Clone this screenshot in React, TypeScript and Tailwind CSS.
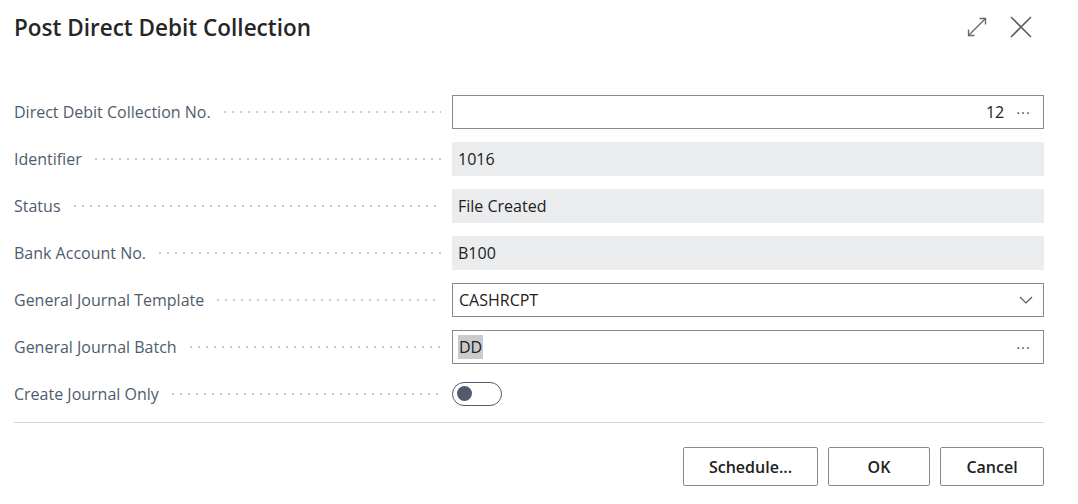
import React from "react";

const dots =
  "flex-1 h-[4px] mx-[10px] bg-[radial-gradient(circle,#c8c8c8_0.9px,transparent_1.3px)] bg-[length:8px_4px] bg-repeat-x";

function Row({ label, children }: { label: string; children: React.ReactNode }) {
  return (
    <div className="flex h-[47px] items-center">
      <div className="flex w-[438px] items-center pr-[1px]">
        <span className="text-[16px] text-[#505c6d] whitespace-nowrap">{label}</span>
        <span className={dots} />
      </div>
      <div className="flex-1">{children}</div>
    </div>
  );
}

function ReadOnly({ value }: { value: string }) {
  return (
    <div className="h-[34px] bg-[#ebecee] pl-[6px] flex items-center text-[16px] text-[#212121]">
      {value}
    </div>
  );
}

function Ellipsis() {
  return <span className="text-[15px] text-[#505c6d] tracking-[1px] leading-none pb-[6px]">...</span>;
}

export default function App() {
  return (
    <div
      className="w-[1078px] h-[504px] bg-white pl-[14px] pr-[34px]"
      style={{ fontFamily: '"Open Sans", "Noto Sans", sans-serif' }}
    >
      <div className="flex h-[88px] items-start pt-[13px]">
        <h1 className="flex-1 text-[22.5px] leading-[30px] font-semibold text-[#262626]">
          Post Direct Debit Collection
        </h1>
        <div className="flex items-center gap-[22px] pt-[3px] pr-[12px]">
          <svg width="22" height="22" viewBox="0 0 22 22" fill="none" stroke="#666" strokeWidth="1.3">
            <path d="M2.5 19.5 L19.5 2.5" />
            <path d="M13.5 2.5 H19.5 V8.5" />
            <path d="M2.5 13.5 V19.5 H8.5" />
          </svg>
          <svg width="22" height="22" viewBox="0 0 22 22" fill="none" stroke="#606060" strokeWidth="1.6">
            <path d="M1 1 L21 21 M21 1 L1 21" />
          </svg>
        </div>
      </div>

      <Row label="Direct Debit Collection No.">
        <div className="h-[34px] border border-[#8a8a8a] flex items-center justify-end gap-[12px] pr-[12px] text-[16px] text-[#212121]">
          <span>12</span>
          <Ellipsis />
        </div>
      </Row>
      <Row label="Identifier">
        <ReadOnly value="1016" />
      </Row>
      <Row label="Status">
        <ReadOnly value="File Created" />
      </Row>
      <Row label="Bank Account No.">
        <ReadOnly value="B100" />
      </Row>
      <Row label="General Journal Template">
        <div className="h-[34px] border border-[#8a8a8a] flex items-center justify-between pl-[6px] pr-[10px] text-[16px] text-[#212121]">
          <span>CASHRCPT</span>
          <svg width="14" height="8" viewBox="0 0 14 8" fill="none" stroke="#505c6d" strokeWidth="1.2">
            <path d="M1 1 L7 7 L13 1" />
          </svg>
        </div>
      </Row>
      <Row label="General Journal Batch">
        <div className="h-[34px] border border-[#8a8a8a] flex items-center justify-between pl-[5px] pr-[12px] text-[16px] text-[#212121]">
          <span className="bg-[#cacaca] px-[1px]">DD</span>
          <Ellipsis />
        </div>
      </Row>
      <Row label="Create Journal Only">
        <div className="w-[50px] h-[24px] rounded-full border-[1.5px] border-[#505c6d] flex items-center pl-[4px]">
          <div className="w-[15px] h-[15px] rounded-full bg-[#505c6d]" />
        </div>
      </Row>

      <div className="mt-[5px] border-t border-[#d6d6d6]" />

      <div className="flex justify-end gap-[10px] pt-[24px]">
        {[
          ["Schedule...", "w-[135px]"],
          ["OK", "w-[102px]"],
          ["Cancel", "w-[104px]"],
        ].map(([t, w]) => (
          <button
            key={t}
            className={`${w} h-[39px] border border-[#8a8a8a] rounded-[2px] bg-white text-[16px] font-semibold text-[#212121]`}
          >
            {t}
          </button>
        ))}
      </div>
    </div>
  );
}
